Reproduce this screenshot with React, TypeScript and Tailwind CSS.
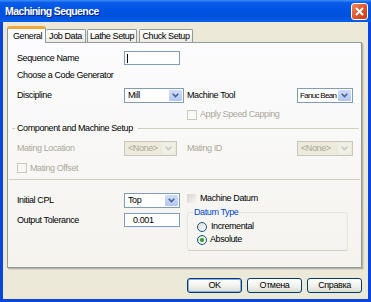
import React from "react";

const FONT = "font-['Liberation_Sans',Arial,sans-serif]";

function Arrow({ disabled }: { disabled?: boolean }) {
  return (
    <svg width="7" height="5" viewBox="0 0 7 5">
      <path
        d="M0.7 0.7 L3.5 3.5 L6.3 0.7"
        fill="none"
        stroke={disabled ? "#c9c7ba" : "#4d6185"}
        strokeWidth="1.6"
      />
    </svg>
  );
}

function Select({
  value,
  disabled,
  className,
  textClass,
}: {
  value: string;
  disabled?: boolean;
  className: string;
  textClass?: string;
}) {
  return (
    <div
      className={
        "flex h-[15px] items-stretch border " +
        (disabled ? "border-[#c9c7ba] bg-[#ebeadb] " : "border-[#7f9db9] bg-white ") +
        className
      }
    >
      <div
        className={
          "flex flex-1 items-center overflow-hidden whitespace-nowrap " +
          (textClass ? textClass + " " : "pl-[3px] ") +
          (disabled ? "text-[#aca899]" : "text-black")
        }
      >
        {value}
      </div>
      <div
        className={
          "m-px flex w-[13px] items-center justify-center rounded-[1px] " +
          (disabled
            ? "bg-[#f0efe8]"
            : "bg-[linear-gradient(180deg,#cfdcfc,#b3c7f6)]")
        }
      >
        <Arrow disabled={disabled} />
      </div>
    </div>
  );
}

function Check({ disabled, gray }: { disabled?: boolean; gray?: boolean }) {
  if (gray)
    return (
      <div className="h-[9px] w-[9px] shrink-0 bg-[linear-gradient(135deg,#d6d5cf,#f4f3ee)]" />
    );
  return (
    <div
      className={
        "h-[10px] w-[10px] shrink-0 border " +
        (disabled ? "border-[#cac8bb] bg-transparent" : "border-[#1c5180] bg-white")
      }
    />
  );
}

function Radio({ checked }: { checked?: boolean }) {
  return (
    <div className="flex h-[10px] w-[10px] shrink-0 items-center justify-center rounded-full border border-[#1c5180] bg-[linear-gradient(135deg,#dcdbd5,#ffffff)]">
      {checked && <div className="h-[4px] w-[4px] rounded-full bg-[#21a121]" />}
    </div>
  );
}

function Button({ label, def }: { label: string; def?: boolean }) {
  return (
    <div
      className={
        "flex h-[15px] w-[55px] items-center justify-center rounded-[3px] border border-[#003c74] bg-[linear-gradient(180deg,#ffffff,#f0f0ea_60%,#dcdad0)] text-black " +
        (def ? "shadow-[inset_0_0_0_1px_#8caee8]" : "")
      }
    >
      {label}
    </div>
  );
}

export default function App() {
  const dis = "text-[#aca899]";
  return (
    <div
      className={
        "flex h-[302px] w-[371px] flex-col bg-[#0a46dc] text-[9px] leading-[11px] tracking-[-0.4px] text-black " +
        FONT
      }
    >
      {/* Title bar */}
      <div className="flex h-[22px] shrink-0 items-start bg-[linear-gradient(180deg,#3d8ef8_0%,#0a5ce8_12%,#0054e3_45%,#0050dc_75%,#0860ee_100%)]">
        <div className="ml-[5px] mt-[5px] text-[10.5px] font-bold leading-[13px] tracking-[-0.6px] text-white [text-shadow:1px_1px_0_#0a1e8a]">
          Machining Sequence
        </div>
        <div className="ml-auto mr-[3px] mt-[3px] flex h-[17px] w-[17px] items-center justify-center rounded-[3px] border border-white bg-[linear-gradient(135deg,#f08a63,#e0552d_50%,#c83e14)]">
          <svg width="9" height="9" viewBox="0 0 9 9">
            <path d="M1 1 L8 8 M8 1 L1 8" stroke="white" strokeWidth="2" />
          </svg>
        </div>
      </div>

      {/* Body */}
      <div className="mx-[3px] mb-[3px] flex flex-1 flex-col bg-[#ece9d8] pl-[4px] pr-[6px] pt-[4px]">
        {/* Tabs */}
        <div className="flex h-[16px] items-end">
          <div className="relative z-10 -mb-px flex h-[17px] w-[39px] items-start justify-start rounded-t-[3px] border-x border-t-[3px] border-x-[#919b9c] border-t-[#f0a83a] bg-[#fcfcfe] pl-[5px] pt-[2px]">
            General
          </div>
          <div className="flex h-[13px] w-[40px] items-center justify-center rounded-t-[2px] border-r border-t border-[#919b9c] bg-[linear-gradient(180deg,#ffffff,#ecebe5)]">
            Job Data
          </div>
          <div className="ml-px flex h-[13px] w-[50px] items-center justify-center rounded-t-[2px] border-x border-t border-[#919b9c] bg-[linear-gradient(180deg,#ffffff,#ecebe5)]">
            Lathe Setup
          </div>
          <div className="ml-[2px] flex h-[13px] w-[54px] items-center justify-center rounded-t-[2px] border-x border-t border-[#919b9c] bg-[linear-gradient(180deg,#ffffff,#ecebe5)]">
            Chuck Setup
          </div>
        </div>

        {/* Panel */}
        <div className="flex h-[226px] flex-col border border-[#919b9c] bg-[linear-gradient(180deg,#fcfcfe,#f4f3ee)] shadow-[1px_1px_0_#b7b4a6,2px_2px_0_#d8d5c6]">
          <div className="mt-[8px] flex h-[14px] items-center pl-[9px]">
            <div className="w-[107px]">Sequence Name</div>
            <div className="flex h-[14px] w-[56px] items-center border border-[#7f9db9] bg-white">
              <div className="ml-[2px] h-[9px] w-px bg-black" />
            </div>
          </div>

          <div className="mt-[4px] flex h-[12px] items-center pl-[9px]">Choose a Code Generator</div>

          <div className="mt-[7px] flex h-[15px] items-center pl-[9px]">
            <div className="w-[107px]">Discipline</div>
            <Select value="Mill" className="w-[60px]" />
            <div className="ml-[3px] w-[110px]">Machine Tool</div>
            <Select
              value="Fanuc Bean"
              className="w-[56px]"
              textClass="pl-[2px] text-[8px] tracking-[-0.7px]"
            />
          </div>

          <div className="mt-[6px] flex h-[11px] items-center pl-[179px]">
            <Check disabled />
            <div className={"ml-[3px] " + dis}>Apply Speed Capping</div>
          </div>

          <div className="mt-[3px] flex h-[10px] items-center pl-[4px]">
            <div className="h-px w-[3px] bg-[#d0d0bf]" />
            <div className="ml-[2px]">Component and Machine Setup</div>
            <div className="ml-[5px] mr-[2px] h-px flex-1 bg-[#d0d0bf]" />
          </div>

          <div className="mt-[8px] flex h-[15px] items-center pl-[9px]">
            <div className={"w-[107px] " + dis}>Mating Location</div>
            <Select value="<None>" disabled className="w-[53px]" />
            <div className={"ml-[10px] w-[110px] " + dis}>Mating ID</div>
            <Select value="<None>" disabled className="w-[56px]" />
          </div>

          <div className="mt-[7px] flex h-[10px] items-center pl-[9px]">
            <Check disabled />
            <div className={"ml-[3px] " + dis}>Mating Offset</div>
          </div>

          <div className="mx-px mt-[6px] h-px bg-[#d0d0bf]" />

          <div className="mt-[13px] flex pl-[9px]">
            <div className="flex w-[170px] flex-col">
              <div className="flex h-[15px] items-center">
                <div className="w-[107px]">Initial CPL</div>
                <Select value="Top" className="w-[56px]" />
              </div>
              <div className="mt-[5px] flex h-[14px] items-center">
                <div className="w-[107px]">Output Tolerance</div>
                <div className="flex h-[14px] w-[56px] items-center border border-[#7f9db9] bg-white pl-[8px]">
                  0.001
                </div>
              </div>
            </div>

            <div className="flex flex-col">
              <div className="flex h-[10px] items-center">
                <Check gray />
                <div className="ml-[4px]">Machine Datum</div>
              </div>
              <fieldset className="mt-[4px] w-[161px] rounded-[3px] border border-[#e6e5dc] border-b-[#d0d0bf] pb-[5px]">
                <legend className="ml-[5px] px-px text-[#0046d5]">Datum Type</legend>
                <div className="mt-[3px] flex h-[11px] items-center pl-[9px]">
                  <Radio />
                  <div className="ml-[4px]">Incremental</div>
                </div>
                <div className="mt-[2px] flex h-[11px] items-center pl-[9px]">
                  <Radio checked />
                  <div className="ml-[3px]">Absolute</div>
                </div>
              </fieldset>
            </div>
          </div>
        </div>

        {/* Buttons */}
        <div className="mt-[10px] flex justify-end gap-[5px]">
          <Button label="OK" def />
          <Button label="Отмена" />
          <Button label="Справка" />
        </div>
      </div>
    </div>
  );
}
